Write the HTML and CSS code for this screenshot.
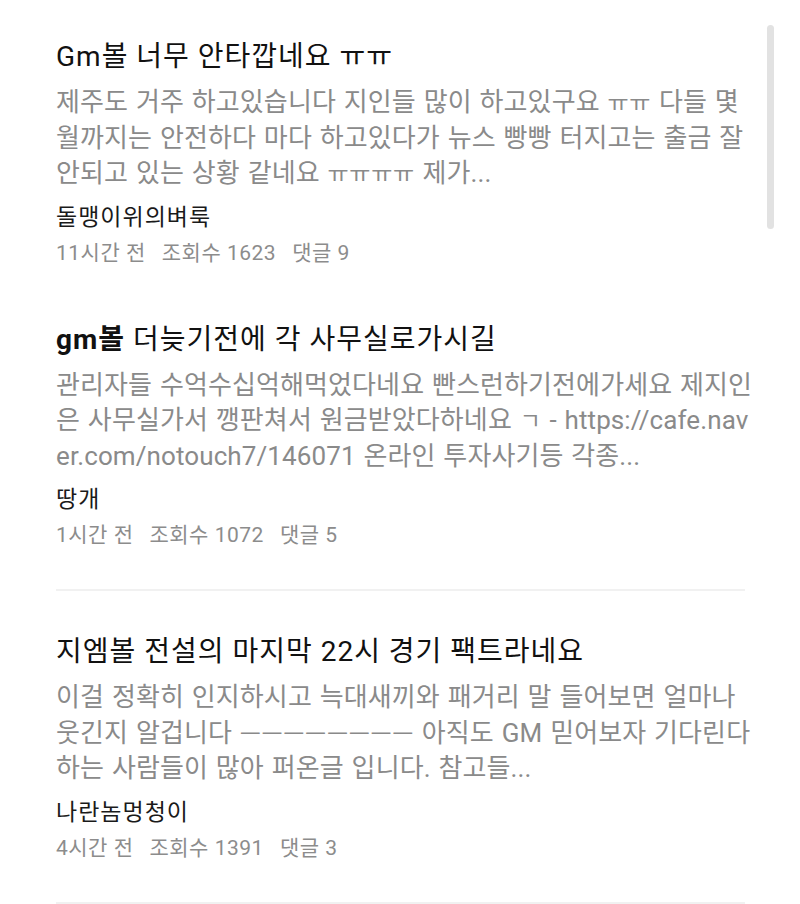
FILE: index.html
```html
<!DOCTYPE html>
<html lang="ko">
<head>
<meta charset="utf-8">
<link rel="stylesheet" href="styles.css">
</head>
<body>
<div class="list">
  <article class="item first">
    <h2 class="title">Gm볼 너무 안타깝네요 ㅠㅠ</h2>
    <p class="body">
      <span class="line">제주도 거주 하고있습니다 지인들 많이 하고있구요 <span class="jamo">ㅠㅠ</span> 다들 몇</span>
      <span class="line">월까지는 안전하다 마다 하고있다가 뉴스 빵빵 터지고는 출금 잘</span>
      <span class="line">안되고 있는 상황 같네요 <span class="jamo">ㅠㅠㅠㅠ</span> 제가...</span>
    </p>
    <div class="author">돌맹이위의벼룩</div>
    <div class="meta"><span>11시간 전</span><span>조회수 1623</span><span>댓글 9</span></div>
  </article>
  <article class="item">
    <h2 class="title"><b>gm볼</b> 더늦기전에 각 사무실로가시길</h2>
    <p class="body">
      <span class="line">관리자들 수억수십억해먹었다네요 빤스런하기전에가세요 제지인</span>
      <span class="line">은 사무실가서 깽판쳐서 원금받았다하네요 <span class="jamo">ㄱ</span> - https://cafe.nav</span>
      <span class="line">er.com/notouch7/146071 온라인 투자사기등 각종...</span>
    </p>
    <div class="author">땅개</div>
    <div class="meta"><span>1시간 전</span><span>조회수 1072</span><span>댓글 5</span></div>
  </article>
  <article class="item">
    <h2 class="title">지엠볼 전설의 마지막 22시 경기 팩트라네요</h2>
    <p class="body">
      <span class="line">이걸 정확히 인지하시고 늑대새끼와 패거리 말 들어보면 얼마나</span>
      <span class="line">웃긴지 알겁니다 <span class="jamo">ㅡㅡㅡㅡㅡㅡㅡㅡ</span> 아직도 GM 믿어보자 기다린다</span>
      <span class="line">하는 사람들이 많아 퍼온글 입니다. 참고들...</span>
    </p>
    <div class="author">나란놈멍청이</div>
    <div class="meta"><span>4시간 전</span><span>조회수 1391</span><span>댓글 3</span></div>
  </article>
</div>
<div class="scrollbar"></div>
</body>
</html>
```

FILE: styles.css
```css
html, body {
  margin: 0;
  padding: 0;
  background: #ffffff;
}
body {
  font-family: Roboto, "Noto Sans CJK KR", sans-serif;
  color: #111111;
  overflow: hidden;
}
.list {
  padding: 0 55px 0 56px;
}
.item {
  padding: 43px 0 39px;
  border-bottom: 2px solid #f1f1f1;
}
.item.first {
  padding: 39px 0 11px;
  border-bottom: none;
}
.title {
  margin: 0;
  font-size: 28px;
  line-height: 36px;
  font-weight: 400;
  letter-spacing: 1px;
  color: #111111;
  white-space: nowrap;
}
.title b {
  font-weight: 700;
}
.body {
  margin: 10px 0 0;
  font-size: 26px;
  line-height: 35.5px;
  letter-spacing: 0.1px;
  word-spacing: 1.3px;
  color: #8a8a8a;
}
.line {
  display: block;
  height: 35.5px;
  white-space: nowrap;
}
.jamo {
  font-size: 23px;
  line-height: 1;
  letter-spacing: 0.6px;
}
.author {
  margin-top: 11px;
  font-size: 23px;
  line-height: 30px;
  letter-spacing: 1px;
  color: #1a1a1a;
}
.meta {
  margin-top: 5px;
  font-size: 21px;
  line-height: 30px;
  letter-spacing: 0.5px;
  color: #8c8c8c;
  display: flex;
  gap: 16px;
}
.scrollbar {
  position: absolute;
  top: 25px;
  left: 767px;
  width: 7px;
  height: 204px;
  border-radius: 4px;
  background: #e2e2e2;
}
```
